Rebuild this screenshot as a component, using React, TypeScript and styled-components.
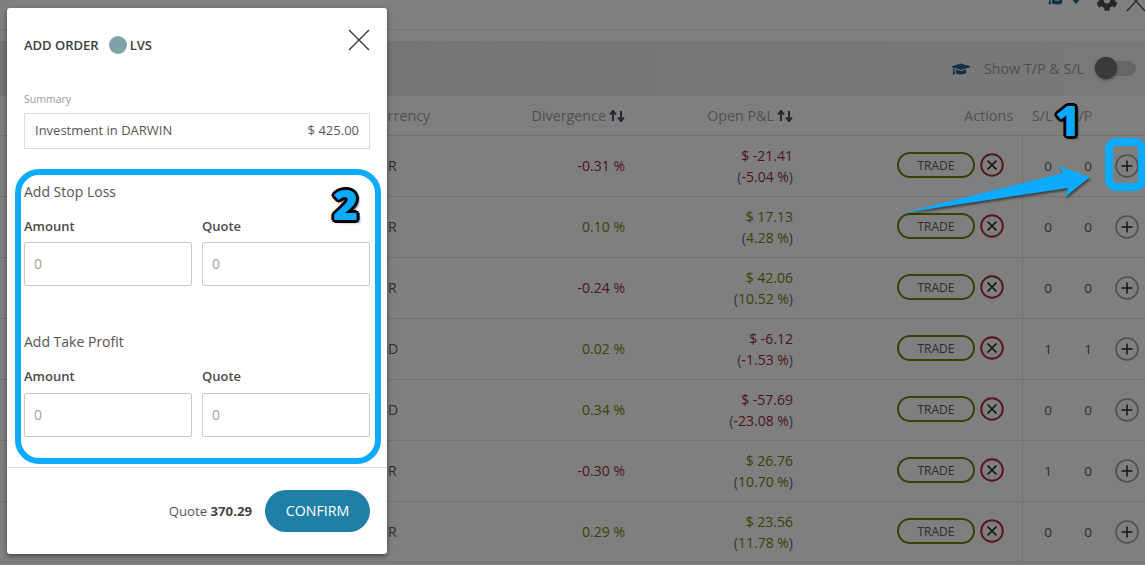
import React from 'react';
import styled, { createGlobalStyle } from 'styled-components';
import { FaCog, FaGraduationCap } from 'react-icons/fa';

interface Position {
  pair: string;
  divergence: string;
  pnl: string;
  pct: string;
  sl: number;
  tp: number;
}

const positions: Position[] = [
  { pair: 'EUR', divergence: '-0.31 %', pnl: '$ -21.41', pct: '-5.04 %', sl: 0, tp: 0 },
  { pair: 'EUR', divergence: '0.10 %', pnl: '$ 17.13', pct: '4.28 %', sl: 0, tp: 0 },
  { pair: 'EUR', divergence: '-0.24 %', pnl: '$ 42.06', pct: '10.52 %', sl: 0, tp: 0 },
  { pair: 'USD', divergence: '0.02 %', pnl: '$ -6.12', pct: '-1.53 %', sl: 1, tp: 1 },
  { pair: 'USD', divergence: '0.34 %', pnl: '$ -57.69', pct: '-23.08 %', sl: 0, tp: 0 },
  { pair: 'EUR', divergence: '-0.30 %', pnl: '$ 26.76', pct: '10.70 %', sl: 1, tp: 0 },
  { pair: 'EUR', divergence: '0.29 %', pnl: '$ 23.56', pct: '11.78 %', sl: 0, tp: 0 }
];

const RED = '#4a1420';
const GREEN = '#344408';
const TEAL = '#0e3446';
const COLUMNS = '370px 125px 130px 168px 220px 10px 50px 30px 1fr';

const GlobalStyle = createGlobalStyle`
  html, body {
    margin: 0;
    padding: 0;
    height: 565px;
    overflow: hidden;
    background: #7f7f7f;
    font-family: "Open Sans", "Liberation Sans", sans-serif;
  }
`;

const Page = styled.div`
  position: relative;
  width: 1145px;
  height: 565px;
  overflow: hidden;
  background: #7f7f7f;
  color: #2d2d2d;
  font-size: 14px;
`;

const TopBar = styled.div`
  height: 29px;
  border-bottom: 1px solid #737373;
  margin-bottom: 11px;
  display: flex;
  justify-content: flex-end;
  align-items: flex-start;
  overflow: hidden;
`;

const TopIcons = styled.div`
  display: flex;
  align-items: flex-start;
  margin-top: -10px;
  margin-right: -1px;
  color: #262626;
`;

const CapTop = styled(FaGraduationCap)`
  width: 18px;
  height: 18px;
  color: ${TEAL};
`;

const Caret = styled.span`
  width: 0;
  height: 0;
  margin: 7px 14px 0 4px;
  border-left: 6px solid transparent;
  border-right: 6px solid transparent;
  border-top: 7px solid ${TEAL};
`;

const Gear = styled(FaCog)`
  width: 22px;
  height: 22px;
  margin-top: -1px;
  margin-right: 8px;
`;

const TopClose = styled.svg`
  width: 20px;
  height: 22px;
`;

const Band = styled.div`
  height: 55px;
  background: linear-gradient(90deg, #737373, #797979);
  display: flex;
  justify-content: flex-end;
  align-items: center;
  padding: 0 9px 0 0;
  box-sizing: border-box;
`;

const BandCap = styled(FaGraduationCap)`
  width: 18px;
  height: 18px;
  color: ${TEAL};
  margin-right: 14px;
  margin-top: 1px;
`;

const BandLabel = styled.span`
  color: #4f4f4f;
  font-size: 14.3px;
  margin-right: 14px;
`;

const Toggle = styled.span`
  position: relative;
  display: block;
  width: 38px;
  height: 15px;
  border-radius: 8px;
  background: #666;
`;

const Knob = styled.span`
  position: absolute;
  left: -3px;
  top: -4px;
  width: 22px;
  height: 22px;
  border-radius: 50%;
  background: #393939;
  box-shadow: 0 1px 3px rgba(0, 0, 0, 0.4);
`;

const HeaderRow = styled.div`
  display: grid;
  grid-template-columns: ${COLUMNS};
  align-items: center;
  height: 39px;
  border-bottom: 1px solid #707070;
  color: #515151;
  font-size: 14.3px;
`;

const Row = styled.div`
  display: grid;
  grid-template-columns: ${COLUMNS};
  align-items: center;
  height: 60px;
  border-bottom: 1px solid #717171;
  font-size: 14px;
`;

const Cell = styled.div<{ $align?: string; $tone?: string }>`
  text-align: ${p => p.$align || 'left'};
  color: ${p => p.$tone || 'inherit'};
  white-space: nowrap;
  padding-bottom: 2px;
`;

const HeadCell = styled(Cell)`
  display: flex;
  align-items: center;
  justify-content: ${p => (p.$align === 'right' ? 'flex-end' : 'flex-start')};
  gap: 3px;
  padding-bottom: 0;
`;

const CountHead = styled.div`
  grid-column: 7 / -1;
  display: flex;
  gap: 18px;
  padding-left: 9px;
  white-space: nowrap;
`;

const Divider = styled.div`
  justify-self: end;
  align-self: stretch;
  width: 1px;
  margin-bottom: -1px;
  background: #717171;
`;

const Count = styled.div`
  text-align: center;
  font-size: 13.5px;
`;

const PnlCell = styled.div`
  text-align: right;
  line-height: 21px;
  white-space: nowrap;
  color: #2c3548;
`;

const Tone = styled.span<{ $tone: string }>`
  color: ${p => p.$tone};
`;

const Actions = styled.div`
  display: flex;
  justify-content: flex-end;
  align-items: center;
  gap: 5px;
  padding-right: 9px;
  margin-top: -2px;
`;

const TradeButton = styled.div`
  box-sizing: border-box;
  width: 78px;
  height: 26px;
  border: 2px solid ${GREEN};
  border-radius: 13px;
  display: flex;
  align-items: center;
  justify-content: center;
  font-size: 12px;
  color: #2d2d2d;
`;

const IconCircle = styled.svg`
  display: block;
  width: 24px;
  height: 24px;
`;

const AddCell = styled.div`
  padding-left: 12px;
`;

const Modal = styled.div`
  position: absolute;
  left: 7px;
  top: 8px;
  width: 380px;
  height: 546px;
  background: #fff;
  border-radius: 3px;
  box-shadow: 0 2px 5px rgba(0, 0, 0, 0.45);
  color: #4a4a4a;
`;

const ModalHeader = styled.div`
  height: 73px;
  padding: 0 17px;
  display: flex;
  align-items: center;
  justify-content: space-between;
`;

const ModalTitle = styled.div`
  display: flex;
  align-items: center;
  font-size: 13px;
  font-weight: 600;
  color: #3d3d3d;
`;

const Dot = styled.span`
  width: 18px;
  height: 18px;
  border-radius: 50%;
  background: #7ea3a6;
  margin: 0 3px 0 10px;
`;

const CloseIcon = styled.svg`
  display: block;
  width: 22px;
  height: 22px;
  margin-top: -10px;
`;

const ModalBody = styled.div`
  padding: 0 17px;
`;

const SummaryLabel = styled.div`
  font-size: 10.5px;
  line-height: 14px;
  color: #9a9a9a;
  margin: 11px 0 7px;
`;

const SummaryBox = styled.div`
  box-sizing: border-box;
  height: 36px;
  border: 1px solid #dcdcdc;
  display: flex;
  align-items: center;
  justify-content: space-between;
  padding: 0 10px 2px;
  font-size: 13px;
  color: #575757;
`;

const SectionTitle = styled.div<{ $top: number }>`
  font-size: 14px;
  line-height: 20px;
  color: #555;
  margin-top: ${p => p.$top}px;
`;

const Fields = styled.div`
  display: grid;
  grid-template-columns: 168px 168px;
  column-gap: 10px;
  margin-top: 16px;
`;

const FieldLabel = styled.div<{ $gap: number }>`
  font-size: 13px;
  font-weight: 600;
  line-height: 16px;
  color: #4a4a4a;
  margin-bottom: ${p => p.$gap}px;
`;

const Input = styled.div`
  box-sizing: border-box;
  height: 44px;
  border: 1px solid #c8c8c8;
  border-radius: 2px;
  display: flex;
  align-items: center;
  padding: 0 9px 2px;
  font-size: 14px;
  color: #a0a0a0;
`;

const Footer = styled.div`
  position: absolute;
  left: 0;
  right: 0;
  bottom: 0;
  height: 85px;
  border-top: 1px solid #e2e2e2;
  display: flex;
  justify-content: flex-end;
  align-items: center;
  padding: 0 17px 1px;
  gap: 13px;
  font-size: 13.2px;
  color: #555;
`;

const QuoteValue = styled.b`
  font-weight: 700;
  color: #444;
`;

const ConfirmButton = styled.div`
  width: 105px;
  height: 42px;
  border-radius: 21px;
  background: #1f7fa6;
  color: #fff;
  font-size: 14.2px;
  display: flex;
  align-items: center;
  justify-content: center;
`;

const Highlight = styled.div<{ $x: number; $y: number; $w: number; $h: number; $r: number; $b: number }>`
  position: absolute;
  box-sizing: border-box;
  left: ${p => p.$x}px;
  top: ${p => p.$y}px;
  width: ${p => p.$w}px;
  height: ${p => p.$h}px;
  border: ${p => p.$b}px solid #0cabff;
  border-radius: ${p => p.$r}px;
`;

const Callout = styled.div<{ $x: number; $y: number }>`
  position: absolute;
  left: ${p => p.$x}px;
  top: ${p => p.$y}px;
  font-family: "Open Sans", "Liberation Sans", sans-serif;
  font-weight: 800;
  font-size: 43px;
  line-height: 40px;
  color: #0cabff;
  text-shadow: 3px 0 0 #000, -3px 0 0 #000, 0 3px 0 #000, 0 -3px 0 #000, 2px 2px 0 #000,
    -2px 2px 0 #000, 2px -2px 0 #000, -2px -2px 0 #000, 3px 3px 2px rgba(0, 0, 0, 0.5);
`;

const Arrow = styled.svg`
  position: absolute;
  left: 895px;
  top: 160px;
  width: 200px;
  height: 60px;
  overflow: visible;
  filter: drop-shadow(1px 2px 1px rgba(0, 0, 0, 0.5));
`;

const SortArrows = () => (
  <svg width="16" height="12" viewBox="0 0 16 12">
    <path d="M4 11V3M1 4.5L4 1l3 3.5" fill="none" stroke="#1c2028" strokeWidth="1.8" />
    <path d="M12 1v8M9 7.5l3 3.5 3-3.5" fill="none" stroke="#1c2028" strokeWidth="1.8" />
  </svg>
);

const RemoveIcon = () => (
  <IconCircle viewBox="0 0 24 24">
    <circle cx="12" cy="12" r="10.8" fill="none" stroke="#561722" strokeWidth="2" />
    <path d="M7.5 7.5l9 9M16.5 7.5l-9 9" stroke="#141414" strokeWidth="1.7" />
  </IconCircle>
);

const AddIcon = () => (
  <IconCircle viewBox="0 0 24 24">
    <circle cx="12" cy="12" r="11" fill="none" stroke="#4f4f4f" strokeWidth="1.6" />
    <path d="M12 6.5v11M6.5 12h11" stroke="#141414" strokeWidth="1.5" />
  </IconCircle>
);

const toneOf = (value: string) => (value.includes('-') ? RED : GREEN);

const Field = ({ label, gap }: { label: string; gap: number }) => (
  <div>
    <FieldLabel $gap={gap}>{label}</FieldLabel>
    <Input>0</Input>
  </div>
);

const App: React.FC = () => (
  <Page>
    <GlobalStyle />
    <TopBar>
      <TopIcons>
        <CapTop />
        <Caret />
        <Gear />
        <TopClose viewBox="0 0 20 22">
          <path d="M1 1l18 20M19 1L1 21" stroke="#2a2a2a" strokeWidth="1.4" fill="none" />
        </TopClose>
      </TopIcons>
    </TopBar>
    <Band>
      <BandCap />
      <BandLabel>Show T/P &amp; S/L</BandLabel>
      <Toggle>
        <Knob />
      </Toggle>
    </Band>
    <HeaderRow>
      <div />
      <HeadCell>Currency</HeadCell>
      <HeadCell $align="right">
        Divergence <SortArrows />
      </HeadCell>
      <HeadCell $align="right">
        Open P&amp;L <SortArrows />
      </HeadCell>
      <HeadCell $align="right">Actions</HeadCell>
      <div />
      <CountHead>
        <span>S/L</span>
        <span>T/P</span>
      </CountHead>
    </HeaderRow>
    {positions.map((p, i) => (
      <Row key={i}>
        <div />
        <Cell>{p.pair}</Cell>
        <Cell $align="right" $tone={toneOf(p.divergence)}>
          {p.divergence}
        </Cell>
        <PnlCell>
          <Tone $tone={toneOf(p.pnl)}>{p.pnl}</Tone>
          <br />(<Tone $tone={toneOf(p.pct)}>{p.pct}</Tone>)
        </PnlCell>
        <Actions>
          <TradeButton>TRADE</TradeButton>
          <RemoveIcon />
        </Actions>
        <Divider />
        <Count>{p.sl}</Count>
        <Count>{p.tp}</Count>
        <AddCell>
          <AddIcon />
        </AddCell>
      </Row>
    ))}

    <Modal>
      <ModalHeader>
        <ModalTitle>
          ADD ORDER <Dot /> LVS
        </ModalTitle>
        <CloseIcon viewBox="0 0 22 22">
          <path d="M1 1l20 20M21 1L1 21" stroke="#333" strokeWidth="1.3" fill="none" />
        </CloseIcon>
      </ModalHeader>
      <ModalBody>
        <SummaryLabel>Summary</SummaryLabel>
        <SummaryBox>
          <span>Investment in DARWIN</span>
          <span>$ 425.00</span>
        </SummaryBox>
        <SectionTitle $top={33}>Add Stop Loss</SectionTitle>
        <Fields>
          <Field label="Amount" gap={8} />
          <Field label="Quote" gap={8} />
        </Fields>
        <SectionTitle $top={46}>Add Take Profit</SectionTitle>
        <Fields>
          <Field label="Amount" gap={9} />
          <Field label="Quote" gap={9} />
        </Fields>
      </ModalBody>
      <Footer>
        <span>
          Quote <QuoteValue>370.29</QuoteValue>
        </span>
        <ConfirmButton>CONFIRM</ConfirmButton>
      </Footer>
    </Modal>

    <Highlight $x={15} $y={169} $w={366} $h={295} $r={24} $b={6} />
    <Highlight $x={1105} $y={138} $w={41} $h={53} $r={11} $b={8} />
    <Arrow viewBox="0 0 200 60">
      <polygon points="7,53 168,13 164,6 195,17 170,37 173,28" fill="#0cabff" />
    </Arrow>
    <Callout $x={1055} $y={100}>1</Callout>
    <Callout $x={333} $y={184}>2</Callout>
  </Page>
);

export default App;
